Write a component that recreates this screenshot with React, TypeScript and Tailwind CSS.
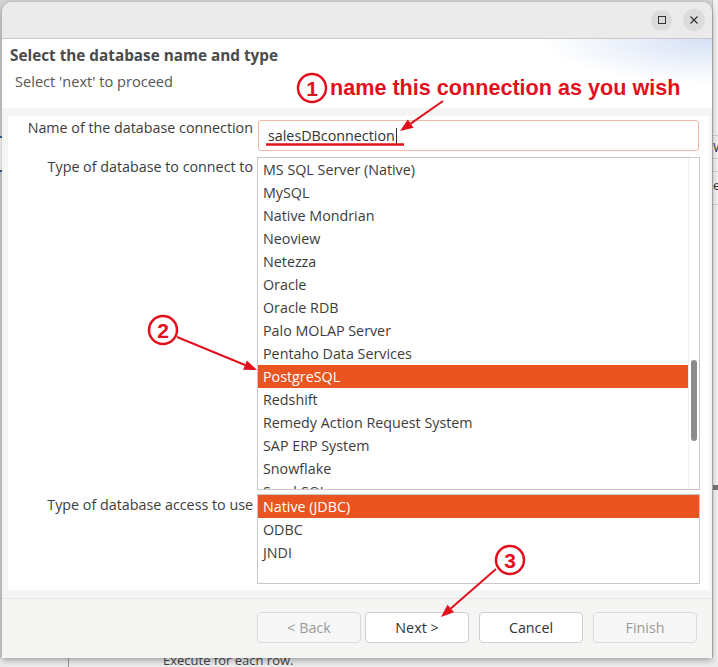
import React from "react";

const items = [
  "MS SQL Server (Native)",
  "MySQL",
  "Native Mondrian",
  "Neoview",
  "Netezza",
  "Oracle",
  "Oracle RDB",
  "Palo MOLAP Server",
  "Pentaho Data Services",
  "PostgreSQL",
  "Redshift",
  "Remedy Action Request System",
  "SAP ERP System",
  "Snowflake",
  "SparkSQL",
];

const access = ["Native (JDBC)", "ODBC", "JNDI"];

const RED = "#e2101c";

function Arrow({ x1, y1, x2, y2 }: { x1: number; y1: number; x2: number; y2: number }) {
  const ang = Math.atan2(y2 - y1, x2 - x1);
  const len = 13;
  const w = 5;
  const bx = x2 - len * Math.cos(ang);
  const by = y2 - len * Math.sin(ang);
  const px = -Math.sin(ang) * w;
  const py = Math.cos(ang) * w;
  return (
    <g>
      <line x1={x1} y1={y1} x2={bx} y2={by} stroke={RED} strokeWidth={2} />
      <polygon points={`${x2},${y2} ${bx + px},${by + py} ${bx - px},${by - py}`} fill={RED} />
    </g>
  );
}

function Badge({ cx, cy, n }: { cx: number; cy: number; n: string }) {
  return (
    <g>
      <circle cx={cx} cy={cy} r={14} fill="none" stroke={RED} strokeWidth={2.5} />
      <text
        x={cx}
        y={cy + 7.5}
        textAnchor="middle"
        fill={RED}
        fontFamily="Liberation Sans, Arial, sans-serif"
        fontWeight="bold"
        fontSize="21"
      >
        {n}
      </text>
    </g>
  );
}

export default function App() {
  return (
    <div
      className="relative w-[718px] h-[667px] overflow-hidden bg-[#d4d4d4]"
      style={{ fontFamily: '"Open Sans", "Noto Sans", sans-serif' }}
    >
      {/* background application peeking out */}
      <div className="absolute left-0 top-[136px] w-[4px] h-[36px] border-2 border-l-0 border-[#2c5c8a] rounded-r-[3px] bg-white" />
      <div className="absolute left-[712px] top-0 w-[6px] h-full bg-[#f2f2f2] border-l border-[#bdbdbd] overflow-hidden">
        <div className="h-[135px]" />
        <div className="h-[24px] border-t border-b border-[#d0d0d0] text-[13px] text-[#333] leading-[22px] whitespace-nowrap overflow-hidden">Wi</div>
        <div className="h-[12px]" />
        <div className="h-[34px] border-t border-b border-[#d0d0d0] text-[13px] text-[#333] leading-[26px] whitespace-nowrap overflow-hidden">er</div>
        <div className="h-[280px]" />
        <div className="h-[5px] bg-[#777]" />
      </div>
      <div className="absolute left-0 top-[658px] w-full h-[9px] bg-[#ececec] overflow-hidden">
        <div className="absolute left-[68px] top-0 h-full w-px bg-[#9a9a9a]" />
        <div className="absolute left-[163px] top-[-6px] text-[13px] text-[#444] leading-[16px] whitespace-nowrap">Execute for each row.</div>
      </div>

      {/* dialog window */}
      <div className="absolute left-[2px] top-[2px] w-[710px] h-[656px] rounded-t-[10px] bg-[#f5f5f4] shadow-[0_2px_6px_rgba(0,0,0,0.35)] flex flex-col overflow-hidden">
        {/* title bar */}
        <div className="h-[37px] shrink-0 bg-[#ebebeb] border-b border-[#c9c9c9] flex items-center justify-end gap-[11px] pr-[7px]">
          <div className="w-[21px] h-[21px] rounded-full bg-[#dcdcdc] flex items-center justify-center">
            <div className="w-[8px] h-[8px] border border-[#333]" />
          </div>
          <div className="w-[22px] h-[22px] rounded-full bg-[#dcdcdc] flex items-center justify-center">
            <svg width="10" height="10" viewBox="0 0 10 10">
              <path d="M1.5 1.5 L8.5 8.5 M8.5 1.5 L1.5 8.5" stroke="#333" strokeWidth="1.2" />
            </svg>
          </div>
        </div>

        {/* header */}
        <div className="h-[69px] shrink-0 bg-white bg-[radial-gradient(ellipse_170px_45px_at_100%_0%,#d5e0f5_0%,#e8eefa_45%,#ffffff_100%)] flex flex-col pl-[8px] pt-[6px]">
          <div className="text-[15.3px] font-bold text-[#4b4b4b] leading-[21px]">Select the database name and type</div>
          <div className="mt-[5px] pl-[5px] text-[14.6px] text-[#555] leading-[20px]">Select 'next' to proceed</div>
        </div>

        {/* body */}
        <div className="flex-1 pt-[8px] pb-[6px] pl-[6px] pr-[3px] flex flex-col">
          <div className="h-[474px] bg-white grid grid-cols-[245px_443px] gap-x-[4px] content-start pt-[4px]">
            {/* name row */}
            <div className="text-right text-[14.3px] text-[#3c3c3c] leading-[20px] mt-[-2px]">Name of the database connection</div>
            <div className="px-[1px]">
              <div className="h-[31px] border border-[#f0b9a6] rounded-[3px] flex items-center pl-[9px] text-[14.3px] text-[#333]">
                salesDBconnection
                <span className="inline-block w-px h-[16px] bg-[#333] ml-[1px]" />
              </div>
            </div>

            {/* type row */}
            <div className="text-right text-[14.3px] text-[#3c3c3c] leading-[20px] pt-[6px]">Type of database to connect to</div>
            <div className="mt-[6px] h-[333px] border border-[#c8c8c8] flex overflow-hidden">
              <div className="flex-1 flex flex-col overflow-hidden">
                {items.map((it) => (
                  <div
                    key={it}
                    className={
                      it === "PostgreSQL"
                        ? "h-[23px] shrink-0 flex items-center pl-[5px] text-[14.3px] bg-[#e95420] text-white whitespace-nowrap"
                        : "h-[23px] shrink-0 flex items-center pl-[5px] text-[14.3px] text-[#3c3c3c] whitespace-nowrap"
                    }
                  >
                    {it}
                  </div>
                ))}
              </div>
              <div className="relative w-[11px] border-l border-[#efefef]">
                <div className="absolute left-[2px] top-[202px] w-[6px] h-[81px] rounded-full bg-[#8c8c8c]" />
              </div>
            </div>

            {/* access row */}
            <div className="text-right text-[14.3px] text-[#3c3c3c] leading-[20px] pt-[5px]">Type of database access to use</div>
            <div className="mt-[4px] h-[90px] border border-[#c8c8c8] flex flex-col">
              {access.map((it, i) => (
                <div
                  key={it}
                  className={
                    i === 0
                      ? "h-[23px] shrink-0 flex items-center pl-[5px] pt-[1px] text-[14.3px] bg-[#e95420] text-white"
                      : "h-[23px] shrink-0 flex items-center pl-[5px] pt-[1px] text-[14.3px] text-[#3c3c3c]"
                  }
                >
                  {it}
                </div>
              ))}
            </div>
          </div>
        </div>

        {/* footer */}
        <div className="h-[60px] shrink-0 border-t border-[#e6e6e6] flex items-start justify-end pt-[13px] pr-[15px]">
          <button className="w-[104px] h-[31px] rounded-[4px] border border-[#dadada] bg-[#f7f7f7] text-[14.3px] text-[#9a9a9a]">&lt; Back</button>
          <button className="ml-[4px] w-[104px] h-[31px] rounded-[4px] border border-[#cfcfcf] bg-white text-[14.3px] text-[#333]">Next &gt;</button>
          <button className="ml-[10px] w-[104px] h-[31px] rounded-[4px] border border-[#cfcfcf] bg-white text-[14.3px] text-[#333]">Cancel</button>
          <button className="ml-[10px] w-[104px] h-[31px] rounded-[4px] border border-[#dadada] bg-[#f7f7f7] text-[14.3px] text-[#9a9a9a]">Finish</button>
        </div>
      </div>

      {/* annotations */}
      <svg className="absolute left-0 top-0 pointer-events-none" width="718" height="667" viewBox="0 0 718 667">
        <Badge cx={312} cy={88} n="1" />
        <text
          x={330}
          y={95}
          fill={RED}
          fontFamily="Liberation Sans, Arial, sans-serif"
          fontWeight="bold"
          fontSize="21.6"
        >
          name this connection as you wish
        </text>
        <Arrow x1={443} y1={101} x2={400} y2={131} />
        <line x1={266} y1={144.5} x2={404} y2={144.5} stroke={RED} strokeWidth={2.5} />
        <Badge cx={163} cy={330} n="2" />
        <Arrow x1={177} y1={337} x2={257} y2={370} />
        <Badge cx={510} cy={560} n="3" />
        <Arrow x1={496} y1={569} x2={441} y2={617} />
      </svg>
    </div>
  );
}
